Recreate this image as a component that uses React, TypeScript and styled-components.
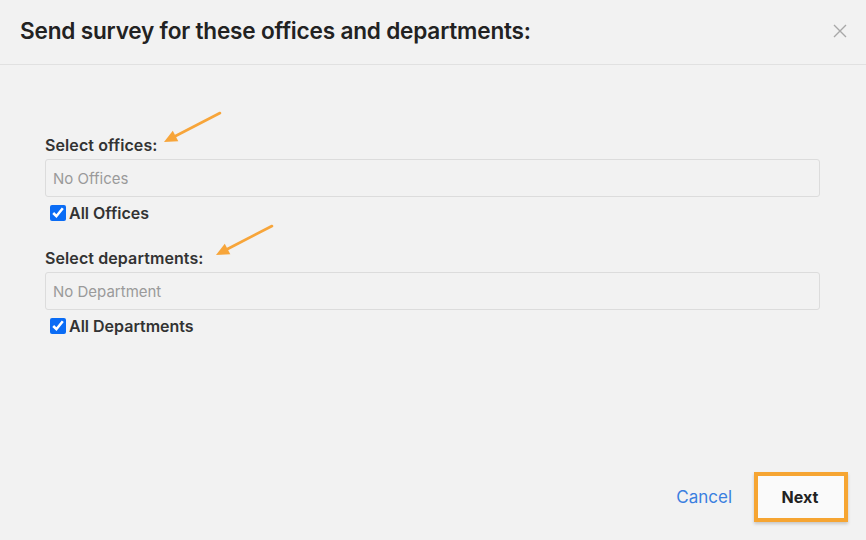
import React from "react";
import styled, { createGlobalStyle } from "styled-components";

const Global = createGlobalStyle`
  html, body { margin: 0; padding: 0; background: #f2f2f2; }
  body { font-family: Inter, "Liberation Sans", Arial, sans-serif; color: #222; }
  * { box-sizing: border-box; }
`;

const Modal = styled.div`
  position: relative;
  width: 866px;
  height: 540px;
  background: #f2f2f2;
  display: flex;
  flex-direction: column;
`;

const Header = styled.div`
  height: 65px;
  border-bottom: 1px solid #e1e1e1;
  display: flex;
  align-items: center;
  justify-content: space-between;
  padding: 0 18px 3px 20px;
`;

const Title = styled.h1`
  margin: 0;
  font-size: 22.6px;
  font-weight: 600;
  letter-spacing: -0.2px;
  color: #222;
`;

const Close = styled.button`
  border: none;
  background: none;
  padding: 0;
  width: 16px;
  height: 16px;
  display: flex;
  cursor: pointer;
`;

const Body = styled.div`
  flex: 1;
  padding: 70px 46px 0 45px;
  display: flex;
  flex-direction: column;
`;

const Section = styled.div<{ $gap?: number }>`
  display: flex;
  flex-direction: column;
  margin-bottom: ${(p) => p.$gap ?? 0}px;
`;

const Label = styled.label`
  font-size: 16px;
  font-weight: 600;
  letter-spacing: 0.1px;
  line-height: 20px;
  color: #333;
  margin-bottom: 4px;
`;

const Field = styled.div`
  height: 38px;
  border: 1px solid #dcdcdc;
  border-radius: 3px;
  background: #f2f2f2;
  display: flex;
  align-items: center;
  padding: 0 7px;
  font-size: 15px;
  color: #9a9a9a;
`;

const CheckRow = styled.label`
  display: flex;
  align-items: center;
  gap: 3px;
  margin: 6px 0 0 5px;
  height: 20px;
  font-size: 16px;
  font-weight: 600;
  color: #333;
`;

const Check = styled.input`
  width: 16px;
  height: 16px;
  margin: 0;
  accent-color: #0a6cf5;
`;

const Footer = styled.div`
  height: 69px;
  display: flex;
  align-items: flex-start;
  justify-content: flex-end;
  padding: 1px 18px 0 0;
  gap: 22px;
`;

const Cancel = styled.button`
  border: none;
  background: none;
  font-family: inherit;
  font-size: 17px;
  color: #3a7fe0;
  height: 50px;
  padding: 0;
  cursor: pointer;
`;

const NextBtn = styled.button`
  width: 94px;
  height: 50px;
  border: 4px solid #f6a532;
  background: #fafafa;
  font-family: inherit;
  font-size: 16px;
  font-weight: 700;
  color: #222;
  padding: 0 2px 0 0;
  box-shadow: 0 2px 3px rgba(0,0,0,0.18);
  cursor: pointer;
`;

const ArrowSvg = styled.svg`
  position: absolute;
  left: 0;
  top: 0;
  overflow: visible;
  pointer-events: none;
`;

const Arrow = ({ x1, y1, x2, y2 }: { x1: number; y1: number; x2: number; y2: number }) => {
  const ang = Math.atan2(y2 - y1, x2 - x1);
  const len = 13;
  const w = 6;
  const bx = x2 - Math.cos(ang) * len;
  const by = y2 - Math.sin(ang) * len;
  const px = -Math.sin(ang) * w;
  const py = Math.cos(ang) * w;
  return (
    <ArrowSvg width={866} height={540}>
      <line x1={x1} y1={y1} x2={bx} y2={by} stroke="#f7a53a" strokeWidth={2.6} strokeLinecap="round" />
      <polygon points={`${x2},${y2} ${bx + px},${by + py} ${bx - px},${by - py}`} fill="#f7a53a" />
    </ArrowSvg>
  );
};

export default function App() {
  return (
    <>
      <Global />
      <Modal>
        <Header>
          <Title>Send survey for these offices and departments:</Title>
          <Close aria-label="Close">
            <svg width="16" height="16" viewBox="0 0 16 16">
              <path d="M2 2 L14 14 M14 2 L2 14" stroke="#a8a8a8" strokeWidth="1.4" />
            </svg>
          </Close>
        </Header>
        <Body>
          <Section $gap={25}>
            <Label>Select offices:</Label>
            <Field>No Offices</Field>
            <CheckRow>
              <Check type="checkbox" defaultChecked />
              All Offices
            </CheckRow>
          </Section>
          <Section>
            <Label>Select departments:</Label>
            <Field>No Department</Field>
            <CheckRow>
              <Check type="checkbox" defaultChecked />
              All Departments
            </CheckRow>
          </Section>
        </Body>
        <Footer>
          <Cancel>Cancel</Cancel>
          <NextBtn>Next</NextBtn>
        </Footer>
        <Arrow x1={220} y1={113} x2={164} y2={142} />
        <Arrow x1={272} y1={226} x2={216} y2={255} />
      </Modal>
    </>
  );
}
